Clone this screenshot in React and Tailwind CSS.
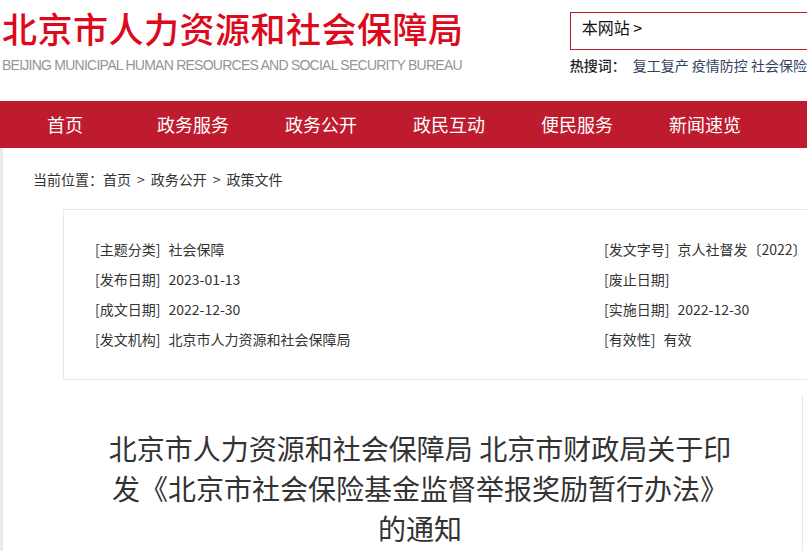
import React from 'react'

const CJK = '"Noto Sans CJK SC", "Noto Sans", sans-serif'

const NAV = ['首页', '政务服务', '政务公开', '政民互动', '便民服务', '新闻速览']

const META_LEFT = [
  ['主题分类', '社会保障'],
  ['发布日期', '2023-01-13'],
  ['成文日期', '2022-12-30'],
  ['发文机构', '北京市人力资源和社会保障局'],
]
const META_RIGHT = [
  ['发文字号', '京人社督发〔2022〕'],
  ['废止日期', ''],
  ['实施日期', '2022-12-30'],
  ['有效性', '有效'],
]

function MetaRow({ label, value }) {
  return (
    <div className="h-[30px] flex items-center whitespace-nowrap">
      <span>[{label}]</span>
      {value && <span className="ml-[8px]">{value}</span>}
    </div>
  )
}

export default function App() {
  return (
    <div className="w-[807px] h-[551px] overflow-hidden bg-white text-[#333]" style={{ fontFamily: CJK }}>
      {/* header */}
      <div className="h-[101px] flex">
        <div className="w-[568px] pl-[2px] pt-[7px]">
          <div className="text-[35px] leading-[42px] font-medium tracking-[0.5px] text-[#dc0a1c] whitespace-nowrap">
            北京市人力资源和社会保障局
          </div>
          <div
            className="mt-[8px] text-[14px] leading-[16px] text-[#959595] tracking-[-0.75px] whitespace-nowrap"
            style={{ fontFamily: '"Liberation Sans", Arial, sans-serif' }}
          >
            BEIJING MUNICIPAL HUMAN RESOURCES AND SOCIAL SECURITY BUREAU
          </div>
        </div>
        <div className="flex-1 pt-[12px] pl-[3px]">
          <div className="h-[38px] border border-r-0 border-[#c0192e] pt-[4px] pl-[11px] text-[16px] leading-[20px] text-[#111]">
            本网站 &gt;
          </div>
          <div className="mt-[6px] text-[14px] leading-[18px] whitespace-nowrap flex">
            <span className="text-[#222] font-medium">热搜词：</span>
            <span className="ml-[7px] text-[#34425f]">复工复产 疫情防控 社会保险</span>
          </div>
        </div>
      </div>

      {/* nav */}
      <div className="h-[47px] bg-[#be1b2e] flex pl-[1px]">
        {NAV.map(n => (
          <div key={n} className="w-[128px] text-center text-[18px] leading-[47px] text-white">
            {n}
          </div>
        ))}
      </div>

      {/* body */}
      <div className="flex h-[403px]">
        <div className="w-[3px] bg-[#ebebeb] shrink-0" />
        <div className="w-[1100px] shrink-0">
          <div className="pl-[30px] pt-[21px] text-[14px] leading-[20px] text-[#333] flex whitespace-nowrap">
            <span>当前位置：首页</span>
            <span className="mx-[6px]">&gt;</span>
            <span>政务公开</span>
            <span className="mx-[6px]">&gt;</span>
            <span>政策文件</span>
          </div>

          <div className="ml-[60px] mt-[20px] w-[1000px] border border-[#e9e7df] pl-[31px] pt-[24px] pb-[25px] flex text-[14px] text-[#333]">
            <div className="w-[509px]">
              {META_LEFT.map(([l, v]) => <MetaRow key={l} label={l} value={v} />)}
            </div>
            <div>
              {META_RIGHT.map(([l, v]) => <MetaRow key={l} label={l} value={v} />)}
            </div>
          </div>

          <div className="flex mt-[15px]">
            <div className="w-[799px] pl-[97px] pt-[33px]">
              <h1 className="w-[640px] text-center text-[28px] leading-[40px] text-[#333] font-normal">
                北京市人力资源和社会保障局 北京市财政局关于印发《北京市社会保险基金监督举报奖励暂行办法》的通知
              </h1>
            </div>
            <div className="h-[200px] border-l border-[#e9e7df] w-[200px] shrink-0" />
          </div>
        </div>
      </div>
    </div>
  )
}
